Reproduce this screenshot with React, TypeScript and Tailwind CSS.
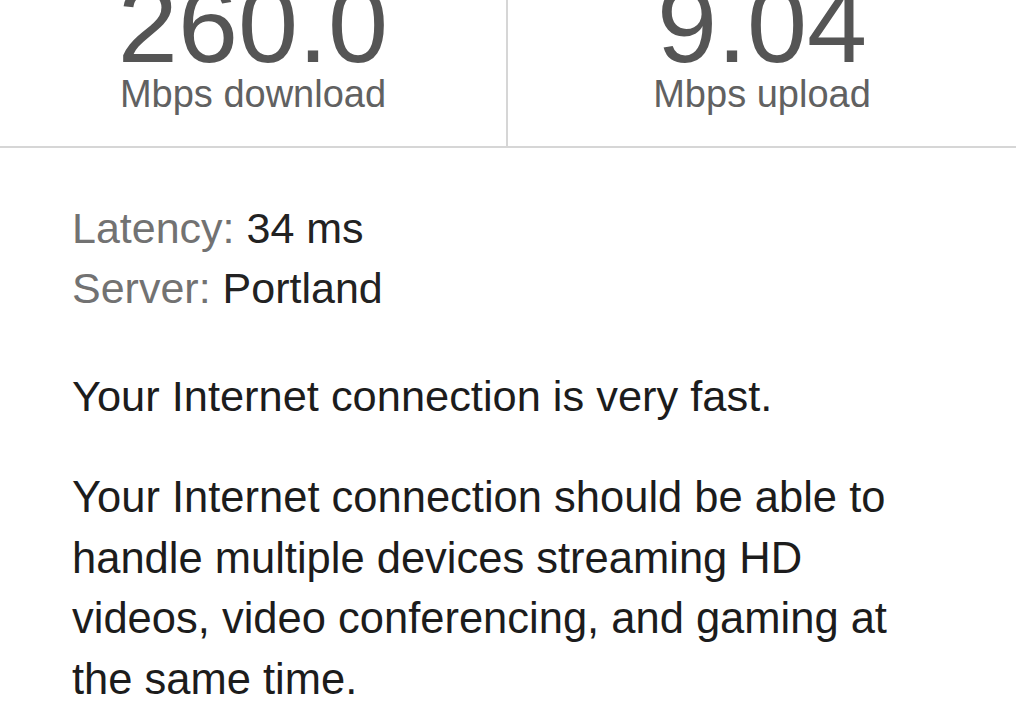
import React from 'react';

type Stat = { value: string; label: string };

const stats: Stat[] = [
  { value: '260.0', label: 'Mbps download' },
  { value: '9.04', label: 'Mbps upload' },
];

const details = [
  { name: 'Latency:', value: '34 ms' },
  { name: 'Server:', value: 'Portland' },
];

const font = { fontFamily: '"Liberation Sans", Arial, Helvetica, sans-serif' };

const App: React.FC = () => {
  return (
    <div className="min-h-screen w-full bg-white overflow-hidden" style={font}>
      {/* Speed results */}
      <div className="grid grid-cols-2 h-[148px] border-b-2 border-[#d6d6d6] box-border overflow-hidden">
        {stats.map((s, i) => (
          <div
            key={s.label}
            className={`flex flex-col items-center ${i === 0 ? 'border-r-2 border-[#d6d6d6]' : ''}`}
          >
            <div className="mt-[-25px] text-[108px] leading-[100px] text-[#555555]">{s.value}</div>
            <div className="text-[38px] leading-none text-[#616161]">{s.label}</div>
          </div>
        ))}
      </div>

      {/* Test details */}
      <div className="pl-[72px] pt-[50px] text-[43px] leading-[60px]">
        {details.map((d) => (
          <div key={d.name}>
            <span className="text-[#727272]">{d.name}</span>{' '}
            <span className="text-[#222222]">{d.value}</span>
          </div>
        ))}

        <p className="mt-[48px] text-[43.4px] text-[#1c1c1c]">Your Internet connection is very fast.</p>
        <p className="mt-[41px] w-[850px] text-[43.5px] leading-[60.5px] text-[#1c1c1c]">
          Your Internet connection should be able to handle multiple devices streaming HD videos,
          video conferencing, and gaming at the same time.
        </p>
      </div>
    </div>
  );
};

export default App;
